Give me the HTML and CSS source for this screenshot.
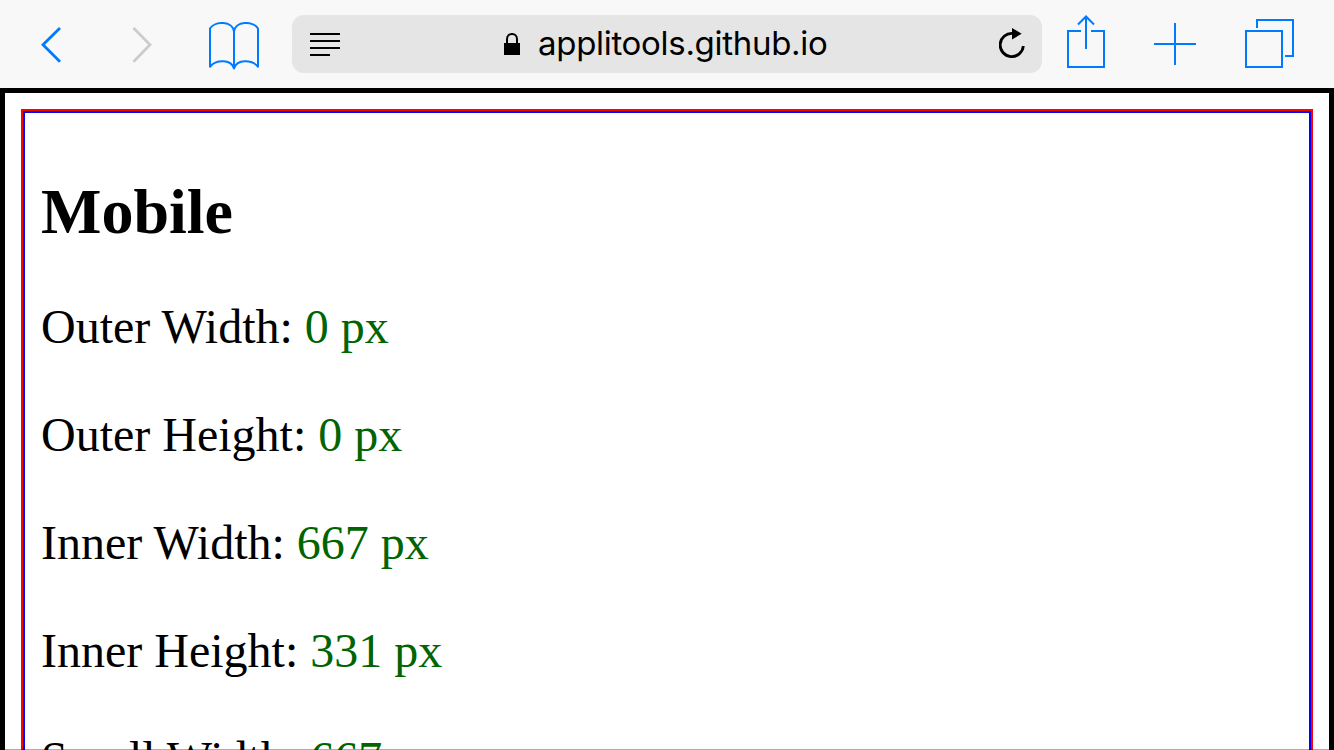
FILE: index.html
```html
<!DOCTYPE html>
<html lang="en">
<head>
<meta charset="utf-8">
<title>Mobile</title>
<link rel="stylesheet" href="styles.css">
</head>
<body>
<header class="toolbar">
  <svg class="icon back" width="22" height="38" viewBox="0 0 22 38"><path d="M20 2 3 18.800 20 35.700"/></svg>
  <svg class="icon forward" width="22" height="38" viewBox="0 0 22 38"><path d="M2.500 2 19 18.800 2.500 35.700"/></svg>
  <svg class="icon book" width="50" height="50" viewBox="0 0 50 50"><path d="M25 10V47M25 11C24 -.3 6 -.3 1 7.500V45.800C7 38.500 22 38 25 47.500C28 38 43 38.500 49 45.800V7.500C44 -.3 26 -.3 25 11"/></svg>
  <div class="address">
    <svg class="reader" width="30" height="23" viewBox="0 0 30 23"><path d="M0 1H30M0 8H30M0 15H30M0 22H20"/></svg>
    <div class="site">
      <svg class="lock" width="16" height="22" viewBox="0 0 16 22"><path class="shackle" d="M3 11V6C3-.7 13-.7 13 6V11"/><path d="M0 10H16V22H0Z"/></svg>
      <span class="url">applitools.github.io</span>
    </div>
    <svg class="reload" width="28" height="32" viewBox="0 0 28 32"><path class="arc" d="M13.500 5.400A11.600 11.600 0 1 0 24.300 18"/><path d="M13 0 22.700 5.700 13 11.500Z"/></svg>
  </div>
  <svg class="icon share" width="38" height="54" viewBox="0 0 38 54"><path d="M14 16H1V52H37V16H24M19 34V2M11 9.500 19 1.500 27 9.500"/></svg>
  <svg class="icon plus" width="42" height="42" viewBox="0 0 42 42"><path d="M0 21H42M21 0V42"/></svg>
  <svg class="icon tabs" width="49" height="49" viewBox="0 0 49 49"><path d="M1 12H37V48H1ZM12 9V1H48V37H40"/></svg>
</header>
<main class="viewport">
  <div class="frame">
    <section class="content">
      <h1>Mobile</h1>
      <p>Outer Width: <span class="value">0 px</span></p>
      <p>Outer Height: <span class="value">0 px</span></p>
      <p>Inner Width: <span class="value">667 px</span></p>
      <p>Inner Height: <span class="value">331 px</span></p>
      <p>Scroll Width: <span class="value">667 px</span></p>
    </section>
  </div>
</main>
<div class="bottom-line"></div>
</body>
</html>
```
FILE: styles.css
```css
* { box-sizing: border-box; }

body {
  display: flex;
  flex-direction: column;
  height: 100vh;
  margin: 0;
  overflow: hidden;
  background: #fff;
  color: #000;
}

svg { display: block; flex: none; }

.toolbar {
  display: flex;
  align-items: flex-start;
  flex: none;
  height: 88px;
  padding-left: 40px;
  background: #f8f8f8;
}

.icon {
  fill: none;
  stroke: #007aff;
  stroke-width: 2;
}

.back, .forward { margin-top: 26px; stroke-width: 2.8; }
.forward { margin-left: 69px; stroke: #ccc; }
.book { margin: 21px 0 0 56px; stroke-linejoin: round; }

.address {
  display: flex;
  align-items: flex-start;
  flex: none;
  width: 750px;
  height: 58px;
  margin: 15px 0 0 33px;
  padding: 0 15px 0 18px;
  border-radius: 12px;
  background: #e5e5e5;
}

.reader { margin-top: 18px; stroke: #000; stroke-width: 2; }

.site {
  display: flex;
  flex: 1;
  padding-left: 164px;
}

.lock { margin-top: 18px; }
.shackle { fill: none; stroke: #000; stroke-width: 2; }

.url {
  margin-left: 18px;
  font: 33px/56px Inter, "Liberation Sans", sans-serif;
  letter-spacing: -0.3px;
  white-space: nowrap;
}

.reload { margin-top: 13px; }
.arc { fill: none; stroke: #000; stroke-width: 2.8; }

.share { margin: 15px 0 0 25px; }
.plus { margin: 23px 0 0 49px; }
.tabs { margin: 19px 0 0 49px; }

.viewport {
  flex: 1;
  min-height: 0;
  padding: 16px 16px 0;
  border: 5px solid #000;
  border-bottom: 0;
  overflow: hidden;
}

.frame {
  border: 2px solid #f00;
  border-bottom: 0;
}

.content {
  padding: 63px 16px 0;
  border: 2px solid #00f;
  border-bottom: 0;
  font: 48px/54px "Liberation Serif", "Times New Roman", serif;
}

h1 {
  margin: 0 0 52px;
  font-size: 64px;
  line-height: 72px;
}

p { margin: 0 0 54px; }

.value { color: #006400; }

/* Hairline drawn over the page at the bottom of the screen */
.bottom-line {
  position: absolute;
  bottom: 0;
  width: 100%;
  height: 1px;
  background: rgba(0, 0, 0, 0.32);
}
```
